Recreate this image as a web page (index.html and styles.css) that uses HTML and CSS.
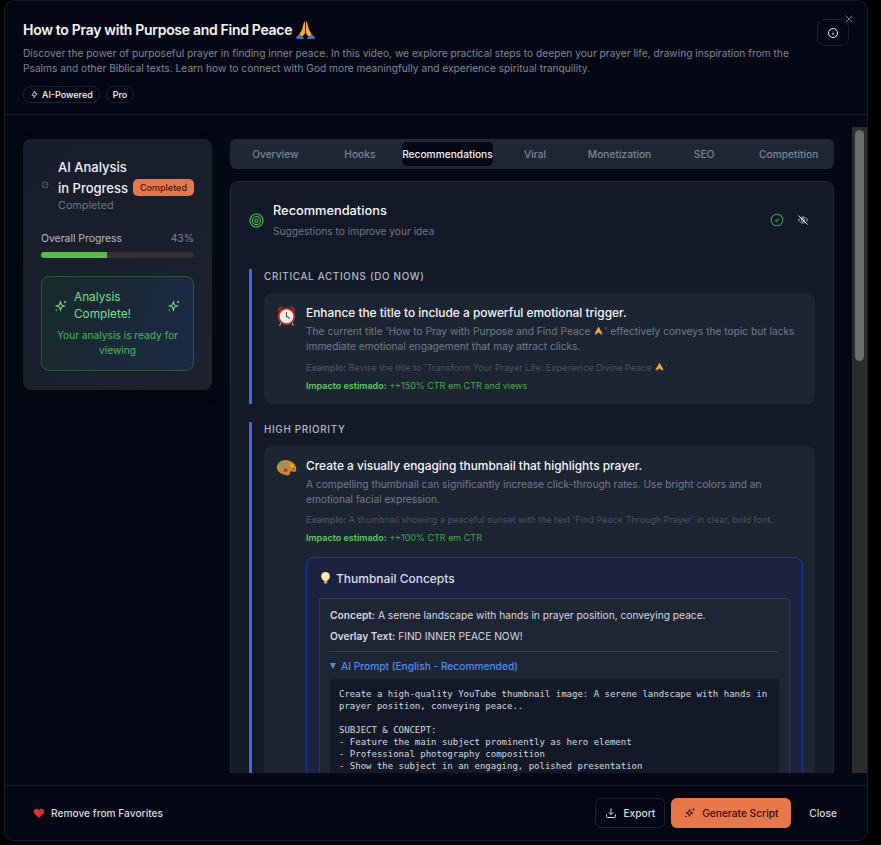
FILE: index.html
```html
<!DOCTYPE html>
<html lang="en">

<head>
    <meta charset="UTF-8">
    <meta name="viewport" content="width=device-width, initial-scale=1.0">
    <title>How to Pray with Purpose and Find Peace</title>
    <link rel="stylesheet" href="styles.css">
</head>

<body>
    <div class="modal">
        <header class="head">
            <div class="head-text">
                <h1>How to Pray with Purpose and Find Peace
                    <svg class="pray" viewBox="0 0 24 24">
                        <path fill="#f2ad2c" d="M11.400 1.500c-1 .2-1.300 1.600-1.700 3.200L8 11l-3.300 5.500 3.800 2.700 2.900-4.200z" />
                        <path fill="#f2ad2c" d="M12.600 1.500c1 .2 1.300 1.600 1.700 3.200L16 11l3.300 5.500-3.800 2.700-2.900-4.200z" />
                        <path fill="#3f78d8" d="M4.700 16.200 1.500 19.500c-.6.800-.2 1.700.7 1.800l6.900.4c1 0 1.300-.8.800-1.500z" />
                        <path fill="#3f78d8" d="m19.300 16.200 3.200 3.300c.6.800.2 1.700-.7 1.800l-6.900.4c-1 0-1.300-.8-.8-1.500z" />
                    </svg>
                </h1>
                <p>Discover the power of purposeful prayer in finding inner peace. In this video, we explore practical steps to deepen your prayer life, drawing inspiration from the Psalms and other Biblical texts. Learn how to connect with God more meaningfully and experience spiritual tranquility.</p>
                <div class="tags">
                    <span class="tag">
                        <svg viewBox="0 0 24 24" class="ico-tag"><path d="M13 3 5 14h6l-1 7 9-12h-6z" /></svg>
                        AI-Powered
                    </span>
                    <span class="tag">Pro</span>
                </div>
            </div>
            <button class="info">
                <svg viewBox="0 0 24 24" class="ico-info"><circle cx="12" cy="12" r="9" /><path d="M12 11v5M12 8v.5" /></svg>
            </button>
            <svg class="close-x" viewBox="0 0 12 12"><path d="M2 2l8 8M10 2l-8 8" /></svg>
        </header>

        <div class="main">
            <div class="scroll">
                <aside class="side">
                    <div class="side-top">
                        <svg class="ico-status" viewBox="0 0 24 24"><circle cx="12" cy="12" r="9" /><path d="M8.500 12.500l2.500 2 4.500-5" /></svg>
                        <div class="side-title">
                            <div class="side-row">
                                <h2>AI Analysis in&nbsp;Progress</h2>
                                <span class="badge">Completed</span>
                            </div>
                            <div class="side-sub">Completed</div>
                        </div>
                    </div>
                    <div class="progress-label"><span>Overall Progress</span><span class="pct">43%</span></div>
                    <div class="bar"><div class="bar-fill" style="width: 43%"></div></div>
                    <div class="done">
                        <div class="done-top">
                            <svg class="ico-spark" viewBox="0 0 24 24"><path d="M11 5l1.800 5.200L18 12l-5.200 1.800L11 19l-1.800-5.200L4 12l5.200-1.800z" /><path d="M19 3v4M17 5h4M4 18v2M3 19h2" /></svg>
                            <span>Analysis Complete!</span>
                            <svg class="ico-spark" viewBox="0 0 24 24"><path d="M11 5l1.800 5.200L18 12l-5.200 1.800L11 19l-1.800-5.200L4 12l5.200-1.800z" /><path d="M19 3v4M17 5h4M4 18v2M3 19h2" /></svg>
                        </div>
                        <p>Your analysis is ready for viewing</p>
                    </div>
                </aside>

                <div class="content">
                    <nav class="tabs">
                        <span>Overview</span>
                        <span>Hooks</span>
                        <span class="active">Recommendations</span>
                        <span>Viral</span>
                        <span>Monetization</span>
                        <span>SEO</span>
                        <span>Competition</span>
                    </nav>

                    <section class="panel">
                        <div class="panel-head">
                            <svg class="ico-target" viewBox="0 0 24 24"><circle cx="12" cy="12" r="10.500" /><circle cx="12" cy="12" r="6.500" /><circle cx="12" cy="12" r="2.500" /></svg>
                            <div class="panel-title">
                                <h2>Recommendations</h2>
                                <p>Suggestions to improve your idea</p>
                            </div>
                            <svg class="ico-check" viewBox="0 0 24 24"><circle cx="12" cy="12" r="10" /><path d="M8.500 12.500l2.500 2 4.500-5" /></svg>
                            <svg class="ico-eye" viewBox="0 0 24 24"><path d="M3 12c2.500-4 5.500-6 9-6s6.500 2 9 6c-2.500 4-5.500 6-9 6s-6.500-2-9-6z" /><circle cx="12" cy="12" r="3" /><path class="slash" d="M3 3l18 18" /></svg>
                        </div>

                        <div class="group">
                            <h3>CRITICAL ACTIONS (DO NOW)</h3>
                            <div class="item">
                                <svg class="emoji" viewBox="0 0 24 24">
                                    <path fill="#a32d2a" d="M2 8C1.500 4 4.500 1 8 2zM22 8c.5-4-2.500-7-6-6z" />
                                    <path stroke="#999" stroke-width="1.500" d="M6 20l-2 3.500M18 20l2 3.500" />
                                    <circle cx="12" cy="13" r="10" fill="#b8332f" />
                                    <circle cx="12" cy="13" r="7.800" fill="#f1ebe3" />
                                    <path stroke="#444" stroke-width="1.200" fill="none" d="M12 8v5l4 2.500" />
                                </svg>
                                <div class="item-body">
                                    <h4>Enhance the title to include a powerful emotional trigger.</h4>
                                    <p class="desc">The current title 'How to Pray with Purpose and Find Peace <svg class="pray-sm" viewBox="0 0 24 24"><path fill="#f2ad2c" d="M12 3 8 11l-4 6 4 3 4-5 4 5 4-3-4-6z" /><path fill="#3f78d8" d="M4 17l-2 3 7 1zM20 17l2 3-7 1z" /></svg>' effectively conveys the topic but lacks immediate emotional engagement that may attract clicks.</p>
                                    <p class="example"><b>Exemplo:</b> Revise the title to 'Transform Your Prayer Life: Experience Divine Peace <svg class="pray-sm" viewBox="0 0 24 24"><path fill="#f2ad2c" d="M12 3 8 11l-4 6 4 3 4-5 4 5 4-3-4-6z" /><path fill="#3f78d8" d="M4 17l-2 3 7 1zM20 17l2 3-7 1z" /></svg>'</p>
                                    <p class="impact"><b>Impacto estimado:</b> ++150% CTR em CTR and views</p>
                                </div>
                            </div>
                        </div>

                        <div class="group">
                            <h3>HIGH PRIORITY</h3>
                            <div class="item">
                                <svg class="emoji" viewBox="0 0 24 24">
                                    <path fill="#c98a2b" d="M1 10C2 4 9 1 15 3c6 1.500 9 7 8 11-.5 2-2.500 2.500-4 1.500-1.500-1-3-.5-3 1.500 0 2.500-2.500 3.500-5 2.500C5 18 .5 15 1 10z" />
                                    <circle cx="6" cy="7" r="2" fill="#4aa3df" />
                                    <circle cx="12" cy="5.500" r="1.800" fill="#6ab04c" />
                                    <circle cx="18" cy="9" r="1.700" fill="#f1c40f" />
                                    <circle cx="20" cy="13" r="1.500" fill="#d9534f" />
                                    <circle cx="11" cy="14" r="2.200" fill="#7d3fb0" />
                                </svg>
                                <div class="item-body">
                                    <h4>Create a visually engaging thumbnail that highlights prayer.</h4>
                                    <p class="desc">A compelling thumbnail can significantly increase click-through rates. Use bright colors and an emotional facial expression.</p>
                                    <p class="example"><b>Exemplo:</b> A thumbnail showing a peaceful sunset with the text 'Find Peace Through Prayer' in clear, bold font.</p>
                                    <p class="impact"><b>Impacto estimado:</b> ++100% CTR em CTR</p>

                                    <div class="concepts">
                                        <h5>
                                            <svg class="bulb" viewBox="0 0 24 24">
                                                <circle cx="12" cy="9" r="8" fill="#fbe9a0" />
                                                <path fill="#fbe9a0" d="M8 14h8l-1 4H9z" />
                                                <path fill="#b9b9b9" d="M9 18h6v4H9z" />
                                            </svg>
                                            Thumbnail Concepts
                                        </h5>
                                        <div class="concept">
                                            <p><b>Concept:</b> A serene landscape with hands in prayer position, conveying peace.</p>
                                            <p><b>Overlay Text:</b> FIND INNER PEACE NOW!</p>
                                            <div class="prompt-label"><i class="tri"></i>AI Prompt (English - Recommended)</div>
                                            <pre class="code">Create a high-quality YouTube thumbnail image: A serene landscape with hands in
prayer position, conveying peace..

SUBJECT &amp; CONCEPT:
- Feature the main subject prominently as hero element
- Professional photography composition
- Show the subject in an engaging, polished presentation
- Perfect lighting and composition that makes the subject stand out
- Eye-catching visual hierarchy</pre>
                                        </div>
                                    </div>
                                </div>
                            </div>
                        </div>
                    </section>
                </div>
            </div>
            <div class="track"><div class="thumb"></div></div>
        </div>

        <footer class="foot">
            <button class="btn-fav">
                <svg class="heart" viewBox="0 0 24 24"><path d="M12 22 3 13C.5 10 1.500 3.500 7 3.500c2.200 0 4 1.200 5 3 1-1.800 2.800-3 5-3 5.500 0 6.500 6.500 4 9.500z" /></svg>
                Remove from Favorites
            </button>
            <div class="foot-right">
                <button class="btn-export">
                    <svg class="ico-btn" viewBox="0 0 24 24"><path d="M12 3v12M7.500 10.500 12 15l4.500-4.500M3 15v4a2 2 0 0 0 2 2h14a2 2 0 0 0 2-2v-4" /></svg>
                    Export
                </button>
                <button class="btn-gen">
                    <svg class="ico-btn" viewBox="0 0 24 24"><path d="M11 5l1.800 5.200L18 12l-5.200 1.800L11 19l-1.800-5.200L4 12l5.200-1.800z" /><path d="M19 3v4M17 5h4M4 18v2M3 19h2" /></svg>
                    Generate Script
                </button>
                <button class="btn-close">Close</button>
            </div>
        </footer>
    </div>
</body>

</html>
```

FILE: styles.css
```css
* {
    box-sizing: border-box;
}

html,
body {
    height: 845px;
    overflow: hidden;
}

body {
    margin: 0;
    background-color: #000;
    font-family: Inter, "Liberation Sans", sans-serif;
    color: #f5f7fa;
}

h1,
h2,
h3,
h4,
h5,
p {
    margin: 0;
}

button {
    font-family: inherit;
    border: 0;
    background: none;
    color: inherit;
    display: flex;
    align-items: center;
}

svg {
    flex: none;
}

.modal {
    position: relative;
    display: flex;
    flex-direction: column;
    margin-left: 4px;
    width: 864px;
    height: 841px;
    background-color: #050814;
    border: 1px solid #1a1e2b;
    border-top-color: #141824;
    border-radius: 10px;
    overflow: hidden;
}

/* header */
.head {
    display: flex;
    height: 114px;
    flex: none;
    padding: 18px 18px 0 18px;
    border-bottom: 1px solid #1a1e2b;
}

.head-text {
    width: 770px;
}

.head h1 {
    display: flex;
    align-items: center;
    gap: 3px;
    height: 22px;
    font-size: 14px;
    font-weight: 600;
    line-height: 22px;
    letter-spacing: -0.3px;
}

.pray {
    width: 21px;
    height: 21px;
}

.pray-sm {
    width: 11px;
    height: 11px;
    vertical-align: -1px;
}

.head p {
    margin-top: 5px;
    font-size: 10.200px;
    line-height: 15px;
    color: #7f8796;
}

.tags {
    display: flex;
    gap: 6px;
    margin-top: 10px;
}

.tag {
    display: flex;
    align-items: center;
    gap: 3px;
    height: 17px;
    padding: 0 6px;
    font-size: 9px;
    font-weight: 500;
    border: 1px solid #1d2230;
    border-radius: 8px;
}

.ico-tag {
    width: 9px;
    height: 9px;
    fill: none;
    stroke: #e6e8ec;
    stroke-width: 2;
}

.info {
    justify-content: center;
    width: 32px;
    height: 27px;
    margin: 0 0 0 24px;
    padding: 0;
    border: 1px solid #1d2230;
    border-radius: 8px;
}

.ico-info {
    width: 12px;
    height: 12px;
    fill: none;
    stroke: #eef0f3;
    stroke-width: 2;
}

.close-x {
    position: absolute;
    right: 13px;
    top: 13px;
    width: 10px;
    height: 10px;
    fill: none;
    stroke: #8a909c;
    stroke-width: 1;
}

/* body */
.main {
    display: flex;
    align-items: stretch;
    height: 658px;
    flex: none;
}

.scroll {
    display: flex;
    align-items: flex-start;
    gap: 18px;
    width: 847px;
    padding: 24px 18px 0 18px;
    overflow: hidden;
}

.track {
    width: 15px;
    margin-top: 12px;
    background-color: #2c2c2e;
}

.thumb {
    width: 9px;
    height: 231px;
    margin: 3px 0 0 3px;
    background-color: #6b6b6b;
    border-radius: 5px;
}

/* sidebar */
.side {
    width: 189px;
    height: 251px;
    flex: none;
    padding: 18px 18px 0 18px;
    background: linear-gradient(135deg, #181d2b, #1c212d);
    border-radius: 8px;
    box-shadow: 0 4px 12px rgba(0, 0, 0, 0.4);
}

.side-top {
    display: flex;
    align-items: center;
    gap: 9px;
}

.ico-status {
    width: 8px;
    height: 8px;
    fill: none;
    stroke: #3f8f43;
    stroke-width: 2.500;
}

.side-row {
    display: flex;
    align-items: center;
}

.side h2 {
    width: 75px;
    font-size: 13px;
    font-weight: 500;
    line-height: 21px;
    color: #eef0f3;
}

.badge {
    width: 61px;
    height: 17px;
    margin-top: 18px;
    font-size: 9px;
    font-weight: 500;
    line-height: 17px;
    text-align: center;
    color: #3a1808;
    background-color: #e8774a;
    border-radius: 5px;
}

.side-sub {
    font-size: 10.800px;
    line-height: 14px;
    color: #6f7786;
}

.progress-label {
    display: flex;
    justify-content: space-between;
    margin-top: 19px;
    font-size: 10.400px;
    line-height: 14px;
    color: #b4bac4;
}

.pct {
    color: #7f8796;
}

.bar {
    height: 6px;
    margin-top: 6px;
    background-color: #3b2f33;
    border-radius: 3px;
    overflow: hidden;
}

.bar-fill {
    height: 100%;
    background-color: #5abb4a;
}

.done {
    height: 95px;
    margin-top: 18px;
    padding: 12px 12px 0 12px;
    background: linear-gradient(110deg, #182a2a, #1c2a48);
    border: 1px solid #2a5a38;
    border-radius: 8px;
}

.done-top {
    display: flex;
    align-items: center;
    gap: 6px;
    font-size: 11.800px;
    line-height: 17px;
    color: #7ade8a;
}

.done-top span {
    flex: 1;
}

.ico-spark {
    width: 14px;
    height: 14px;
    fill: none;
    stroke: #7ade8a;
    stroke-width: 1.800;
}

.done p {
    margin-top: 5px;
    font-size: 10.200px;
    line-height: 15px;
    text-align: center;
    color: #4bb65a;
}

/* tabs */
.content {
    width: 604px;
    flex: none;
}

.tabs {
    display: grid;
    grid-template-columns: repeat(7, 1fr);
    height: 30px;
    padding: 3px;
    background-color: #1f2733;
    border-radius: 6px;
    font-size: 10.200px;
    font-weight: 500;
    color: #7b8494;
}

.tabs span {
    display: flex;
    align-items: center;
    justify-content: center;
    white-space: nowrap;
}

.tabs .active {
    color: #f0f2f5;
    background-color: #050814;
    border-radius: 5px;
}

/* panel */
.panel {
    margin-top: 12px;
    height: 1200px;
    padding: 18px 18px 0 18px;
    background-color: #131926;
    border: 1px solid #232a38;
    border-radius: 8px;
}

.panel-head {
    display: flex;
    align-items: center;
    height: 40px;
    padding-right: 6px;
}

.ico-target {
    width: 15px;
    height: 15px;
    margin-right: 9px;
    fill: none;
    stroke: #4ec152;
    stroke-width: 1.800;
}

.panel-title {
    flex: 1;
    margin-top: -1px;
}

.panel-title h2 {
    font-size: 12.800px;
    font-weight: 500;
    line-height: 20px;
}

.panel-title p {
    margin-top: 3px;
    font-size: 10.200px;
    line-height: 15px;
    color: #6f7786;
}

.ico-check {
    width: 14px;
    height: 14px;
    margin-right: 13px;
    fill: none;
    stroke: #46a04c;
    stroke-width: 1.800;
}

.ico-eye {
    width: 12px;
    height: 12px;
    fill: none;
    stroke: #a5abb5;
    stroke-width: 2;
}

.ico-eye .slash {
    stroke: #f0f2f5;
}

.group {
    margin-top: 29px;
    padding-left: 12px;
    border-left: 3px solid #4169e8;
}

.group+.group {
    margin-top: 18px;
}

.group h3 {
    height: 24px;
    font-size: 9.800px;
    font-weight: 500;
    line-height: 15px;
    letter-spacing: 0.7px;
    color: #b4bac4;
}

.item {
    display: flex;
    gap: 9px;
    padding: 11px 12px 12px 12px;
    background-color: #1e2532;
    border-radius: 8px;
}

.emoji {
    width: 21px;
    height: 23px;
}

.item-body {
    flex: 1;
    min-width: 0;
}

.item h4 {
    font-size: 11.900px;
    font-weight: 500;
    line-height: 18px;
}

.desc {
    margin-top: 2px;
    font-size: 10.200px;
    line-height: 15px;
    color: #737b8a;
}

.example {
    margin-top: 7px;
    font-size: 9px;
    line-height: 12px;
    color: #4b5361;
}

.example b {
    font-weight: 600;
}

.impact {
    margin-top: 6px;
    font-size: 9px;
    line-height: 12px;
    color: #46a84e;
}

.impact b {
    font-weight: 600;
    color: #5cc763;
}

/* thumbnail concepts */
.concepts {
    margin-top: 13px;
    padding: 0 12px 12px 12px;
    background-color: #1b2340;
    border: 1px solid #203799;
    border-radius: 8px;
}

.concepts h5 {
    display: flex;
    align-items: center;
    gap: 4px;
    height: 40px;
    font-size: 12px;
    font-weight: 500;
    color: #d8deec;
}

.bulb {
    width: 13px;
    height: 14px;
}

.concept {
    padding: 9px 10px 10px 10px;
    background-color: #1f2633;
    border: 1px solid #333b48;
    border-radius: 2px;
}

.concept p {
    margin-bottom: 6px;
    font-size: 10.200px;
    line-height: 15px;
    color: #d5d9e0;
}

.concept b {
    font-weight: 600;
}

.prompt-label {
    display: flex;
    align-items: center;
    gap: 5px;
    height: 28px;
    margin-top: 7px;
    font-size: 10.200px;
    font-weight: 500;
    color: #4f8bec;
    border-top: 1px solid #333b48;
}

.tri {
    width: 0;
    height: 0;
    border-left: 3.500px solid transparent;
    border-right: 3.500px solid transparent;
    border-top: 6px solid #4f8bec;
}

.code {
    margin: 0;
    padding: 9px;
    font-family: "DejaVu Sans Mono", monospace;
    font-size: 9px;
    line-height: 12px;
    color: #d5d9e0;
    background-color: #131926;
    border-radius: 4px;
}

/* footer */
.foot {
    display: flex;
    align-items: center;
    justify-content: space-between;
    flex: none;
    height: 55px;
    margin-top: 12px;
    padding: 0 30px 0 28px;
    border-top: 1px solid #1a1e2b;
}

.foot button {
    font-size: 10.200px;
    font-weight: 500;
    padding: 0;
    height: 30px;
}

.btn-fav {
    gap: 6px;
    color: #d8dbe0;
}

.heart {
    width: 12px;
    height: 12px;
    fill: #dc2f35;
}

.foot-right {
    display: flex;
    align-items: center;
    gap: 6px;
}

.ico-btn {
    width: 12px;
    height: 12px;
    fill: none;
    stroke: currentColor;
    stroke-width: 2;
}

.foot .btn-export {
    gap: 6px;
    width: 70px;
    justify-content: center;
    border: 1px solid #1d2230;
    border-radius: 6px;
    color: #d8dbe0;
}

.foot .btn-gen {
    gap: 6px;
    width: 120px;
    justify-content: center;
    color: #2b1208;
    background-color: #e8774a;
    border-radius: 6px;
}

.foot .btn-close {
    margin-left: 12px;
    color: #d8dbe0;
}
```
